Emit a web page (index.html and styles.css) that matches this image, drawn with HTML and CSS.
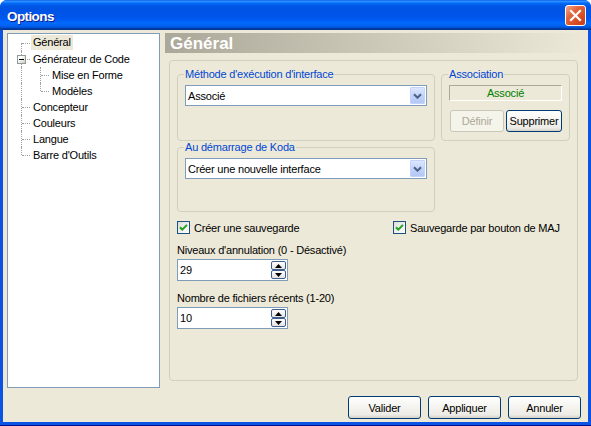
FILE: index.html
```html
<!DOCTYPE html>
<html lang="fr">
<head>
<meta charset="utf-8">
<title>Options</title>
<link rel="stylesheet" href="styles.css">
</head>
<body>
<div class="window">
  <div class="titlebar">
    <span class="title">Options</span>
    <button class="close" type="button" aria-label="Fermer">
      <svg width="13" height="13" viewBox="0 0 13 13"><path d="M2 2L11 11M11 2L2 11" stroke="#fff" stroke-width="2.2" stroke-linecap="square"/></svg>
    </button>
  </div>
  <div class="client">
    <div class="main">
      <div class="tree">
        <div class="row"><span class="g first"></span><span class="label sel">Général</span></div>
        <div class="row"><span class="g"><span class="pm"></span></span><span class="label">Générateur de Code</span></div>
        <div class="row"><span class="g cont"></span><span class="g2"></span><span class="label">Mise en Forme</span></div>
        <div class="row"><span class="g cont"></span><span class="g2 last"></span><span class="label">Modèles</span></div>
        <div class="row"><span class="g"></span><span class="label">Concepteur</span></div>
        <div class="row"><span class="g"></span><span class="label">Couleurs</span></div>
        <div class="row"><span class="g"></span><span class="label">Langue</span></div>
        <div class="row"><span class="g last"></span><span class="label">Barre d'Outils</span></div>
      </div>
      <div class="pane">
        <div class="header">Général</div>
        <div class="panel">
          <div class="toprow">
            <fieldset class="group method">
              <legend>Méthode d'exécution d'interface</legend>
              <div class="combo">
                <span>Associé</span>
                <span class="combo-btn"><svg width="9" height="6" viewBox="0 0 9 6"><path d="M1 1.2L4.5 4.7L8 1.2" fill="none" stroke="#4d6185" stroke-width="2"/></svg></span>
              </div>
            </fieldset>
            <fieldset class="group assoc">
              <legend>Association</legend>
              <div class="status">Associé</div>
              <div class="assoc-btns">
                <button class="btn btn-sm def" type="button" disabled>Définir</button>
                <button class="btn btn-sm sup" type="button">Supprimer</button>
              </div>
            </fieldset>
          </div>
          <fieldset class="group startup">
            <legend>Au démarrage de Koda</legend>
            <div class="combo">
              <span>Créer une nouvelle interface</span>
              <span class="combo-btn"><svg width="9" height="6" viewBox="0 0 9 6"><path d="M1 1.2L4.5 4.7L8 1.2" fill="none" stroke="#4d6185" stroke-width="2"/></svg></span>
            </div>
          </fieldset>
          <div class="checks">
            <div class="check"><span class="cb"><svg width="11" height="11" viewBox="0 0 11 11"><path d="M2 5.2L4.3 7.6L9 2.9" fill="none" stroke="#21a121" stroke-width="2"/></svg></span><span>Créer une sauvegarde</span></div>
            <div class="check"><span class="cb"><svg width="11" height="11" viewBox="0 0 11 11"><path d="M2 5.2L4.3 7.6L9 2.9" fill="none" stroke="#21a121" stroke-width="2"/></svg></span><span>Sauvegarde par bouton de MAJ</span></div>
          </div>
          <div class="field-label">Niveaux d'annulation (0 - Désactivé)</div>
          <div class="spin">
            <span>29</span>
            <span class="spin-btns">
              <span class="sb"><svg width="7" height="4" viewBox="0 0 7 4"><path d="M0 4L3.5 0L7 4Z" fill="#000"/></svg></span>
              <span class="sb"><svg width="7" height="4" viewBox="0 0 7 4"><path d="M0 0L3.5 4L7 0Z" fill="#000"/></svg></span>
            </span>
          </div>
          <div class="field-label second">Nombre de fichiers récents (1-20)</div>
          <div class="spin">
            <span>10</span>
            <span class="spin-btns">
              <span class="sb"><svg width="7" height="4" viewBox="0 0 7 4"><path d="M0 4L3.5 0L7 4Z" fill="#000"/></svg></span>
              <span class="sb"><svg width="7" height="4" viewBox="0 0 7 4"><path d="M0 0L3.5 4L7 0Z" fill="#000"/></svg></span>
            </span>
          </div>
        </div>
      </div>
    </div>
    <div class="buttons">
      <button class="btn" type="button">Valider</button>
      <button class="btn" type="button">Appliquer</button>
      <button class="btn" type="button">Annuler</button>
    </div>
  </div>
</div>
</body>
</html>
```
FILE: styles.css
```css
html, body {
  margin: 0;
  background: #ffffff;
}
body {
  font-family: "Liberation Sans", Arial, sans-serif;
  font-size: 11px;
  letter-spacing: -0.2px;
  color: #000;
}
.window {
  width: 591px;
  height: 426px;
  box-sizing: border-box;
  display: flex;
  flex-direction: column;
  background: #0a53e4;
  border-radius: 7px 7px 0 0;
  border-bottom: 1px solid #00138c;
  overflow: hidden;
}
.titlebar {
  height: 30px;
  flex: none;
  display: flex;
  align-items: center;
  justify-content: space-between;
  padding: 0 5px 0 7px;
  background: linear-gradient(to bottom, #0058ee 0%, #3593ff 4%, #288eff 6%, #127dff 8%, #036ffc 10%, #0262ee 14%, #0057e5 20%, #0054e3 24%, #0055eb 56%, #005bf5 66%, #026afe 76%, #0062ef 86%, #0052d6 92%, #0040ab 94%, #003092 100%);
}
.title {
  color: #fff;
  font-weight: bold;
  font-size: 13.5px;
  letter-spacing: -0.6px;
  line-height: 16px;
  padding-top: 4px;
  text-shadow: 1px 1px #0f1c8c;
}
.close {
  width: 21px;
  height: 21px;
  box-sizing: border-box;
  padding: 0;
  border: 1px solid #fff;
  border-radius: 3px;
  background: linear-gradient(135deg, #f4a68d 0%, #e2673f 35%, #d64c24 70%, #c23e1b 100%);
  display: flex;
  align-items: center;
  justify-content: center;
}
.client {
  flex: 1;
  margin: 0 3px 3px 3px;
  background: #ece9d8;
  display: flex;
  flex-direction: column;
}
.main {
  display: flex;
  gap: 5px;
  padding: 3px 0 0 4px;
}
.tree {
  width: 153px;
  height: 355px;
  box-sizing: border-box;
  border: 1px solid #7f9db9;
  background: #fff;
  padding-top: 1px;
  flex: none;
}
.row {
  display: flex;
  height: 16px;
  align-items: stretch;
}
.label {
  line-height: 16px;
  padding: 0 2px;
  white-space: nowrap;
}
.label.sel {
  background: #ece9d8;
  line-height: 15px;
  height: 15px;
}
.g, .g2 {
  position: relative;
  flex: none;
  height: 16px;
}
.g { width: 23px; }
.g2 { width: 19px; }
.g::before, .g2::before {
  content: "";
  position: absolute;
  top: 0;
  bottom: 0;
  border-left: 1px dotted #a0a0a0;
}
.g::before { left: 13px; }
.g2::before { left: 9px; }
.g::after, .g2::after {
  content: "";
  position: absolute;
  top: 8px;
  width: 8px;
  border-top: 1px dotted #a0a0a0;
}
.g::after { left: 14px; }
.g2::after { left: 10px; }
.g.first::before { top: 8px; }
.g.last::before, .g2.last::before { bottom: 8px; }
.g.cont::after { display: none; }
.pm {
  position: absolute;
  left: 9px;
  top: 4px;
  width: 9px;
  height: 9px;
  box-sizing: border-box;
  border: 1px solid #919b9c;
  background: linear-gradient(135deg, #ffffff 30%, #cbc8bc);
  display: flex;
  align-items: center;
  justify-content: center;
  z-index: 1;
}
.pm::before {
  content: "";
  width: 5px;
  height: 1px;
  background: #000;
}
.pane {
  flex: 1;
  display: flex;
  flex-direction: column;
}
.header {
  height: 20px;
  box-sizing: border-box;
  padding: 1px 0 0 5px;
  line-height: 19px;
  font-size: 17px;
  font-weight: bold;
  letter-spacing: 0;
  color: #fff;
  background: linear-gradient(to right, #aca899 0%, #ece9d8 100%);
}
.panel {
  margin: 7px 10px 0 4px;
  height: 321px;
  box-sizing: border-box;
  border: 1px solid #d0d0bf;
  border-radius: 4px;
  padding: 7px 7px 0 7px;
}
.toprow {
  display: flex;
  align-items: flex-start;
  gap: 6px;
}
fieldset.group {
  margin: 0;
  min-width: 0;
  box-sizing: border-box;
  border: 1px solid #d0d0bf;
  border-radius: 4px;
  padding: 4px 7px 0 7px;
}
legend {
  padding: 0 1px;
  margin-left: -1px;
  color: #0046d5;
  line-height: 13px;
  height: 13px;
  font-size: 11px;
}
.method { width: 258px; height: 73px; }
.assoc { width: 129px; height: 73px; }
.startup {
  width: 258px;
  height: 71px;
  margin-top: 1px;
  padding-top: 3px;
}
.combo {
  height: 21px;
  box-sizing: border-box;
  border: 1px solid #7f9db9;
  background: #fff;
  display: flex;
  align-items: center;
  justify-content: space-between;
  padding: 0 1px 0 2px;
}
.combo-btn {
  width: 15px;
  height: 17px;
  box-sizing: border-box;
  border: 1px solid #c3d3fd;
  border-radius: 1px;
  background: linear-gradient(to bottom, #dde7fe 0%, #c2d3fb 50%, #b4c8f6 100%);
  display: flex;
  align-items: center;
  justify-content: center;
}
.status {
  height: 16px;
  box-sizing: border-box;
  border: 1px solid;
  border-color: #aca899 #ffffff #ffffff #aca899;
  color: #008000;
  text-align: center;
  line-height: 14px;
}
.assoc-btns {
  display: flex;
  justify-content: flex-end;
  gap: 2px;
  margin-top: 9px;
}
.btn {
  width: 73px;
  height: 23px;
  box-sizing: border-box;
  padding: 0;
  font: inherit;
  letter-spacing: inherit;
  color: #000;
  border: 1px solid #003c74;
  border-radius: 3px;
  background: linear-gradient(to bottom, #ffffff 0%, #f4f3ee 50%, #ecebe6 85%, #d6d0c5 100%);
}
.btn-sm { height: 22px; }
.def {
  width: 54px;
  color: #aca899;
  border-color: #c9c7ba;
  background: #f5f4ea;
}
.sup { width: 56px; }
.checks {
  display: grid;
  grid-template-columns: 216px auto;
  margin-top: 9px;
}
.check {
  display: flex;
  align-items: center;
  gap: 4px;
  height: 13px;
  white-space: nowrap;
}
.cb {
  width: 13px;
  height: 13px;
  box-sizing: border-box;
  border: 1px solid #1c5180;
  background: linear-gradient(135deg, #dcdcd7 0%, #ffffff 100%);
  display: flex;
  align-items: center;
  justify-content: center;
  flex: none;
}
.field-label {
  margin-top: 10px;
  line-height: 13px;
}
.field-label.second { margin-top: 11px; }
.spin {
  width: 111px;
  height: 22px;
  margin-top: 2px;
  box-sizing: border-box;
  border: 1px solid #7f9db9;
  background: #fff;
  display: flex;
  align-items: center;
  justify-content: space-between;
  padding: 0 1px 0 2px;
}
.spin-btns {
  display: flex;
  flex-direction: column;
}
.sb {
  width: 15px;
  height: 9px;
  box-sizing: border-box;
  border: 1px solid #3d5e8f;
  border-radius: 2px;
  background: linear-gradient(to bottom, #ffffff, #e4e4e0);
  display: flex;
  align-items: center;
  justify-content: center;
}
.buttons {
  display: flex;
  justify-content: flex-end;
  gap: 7px;
  padding-right: 7px;
  margin-top: 8px;
}
```
